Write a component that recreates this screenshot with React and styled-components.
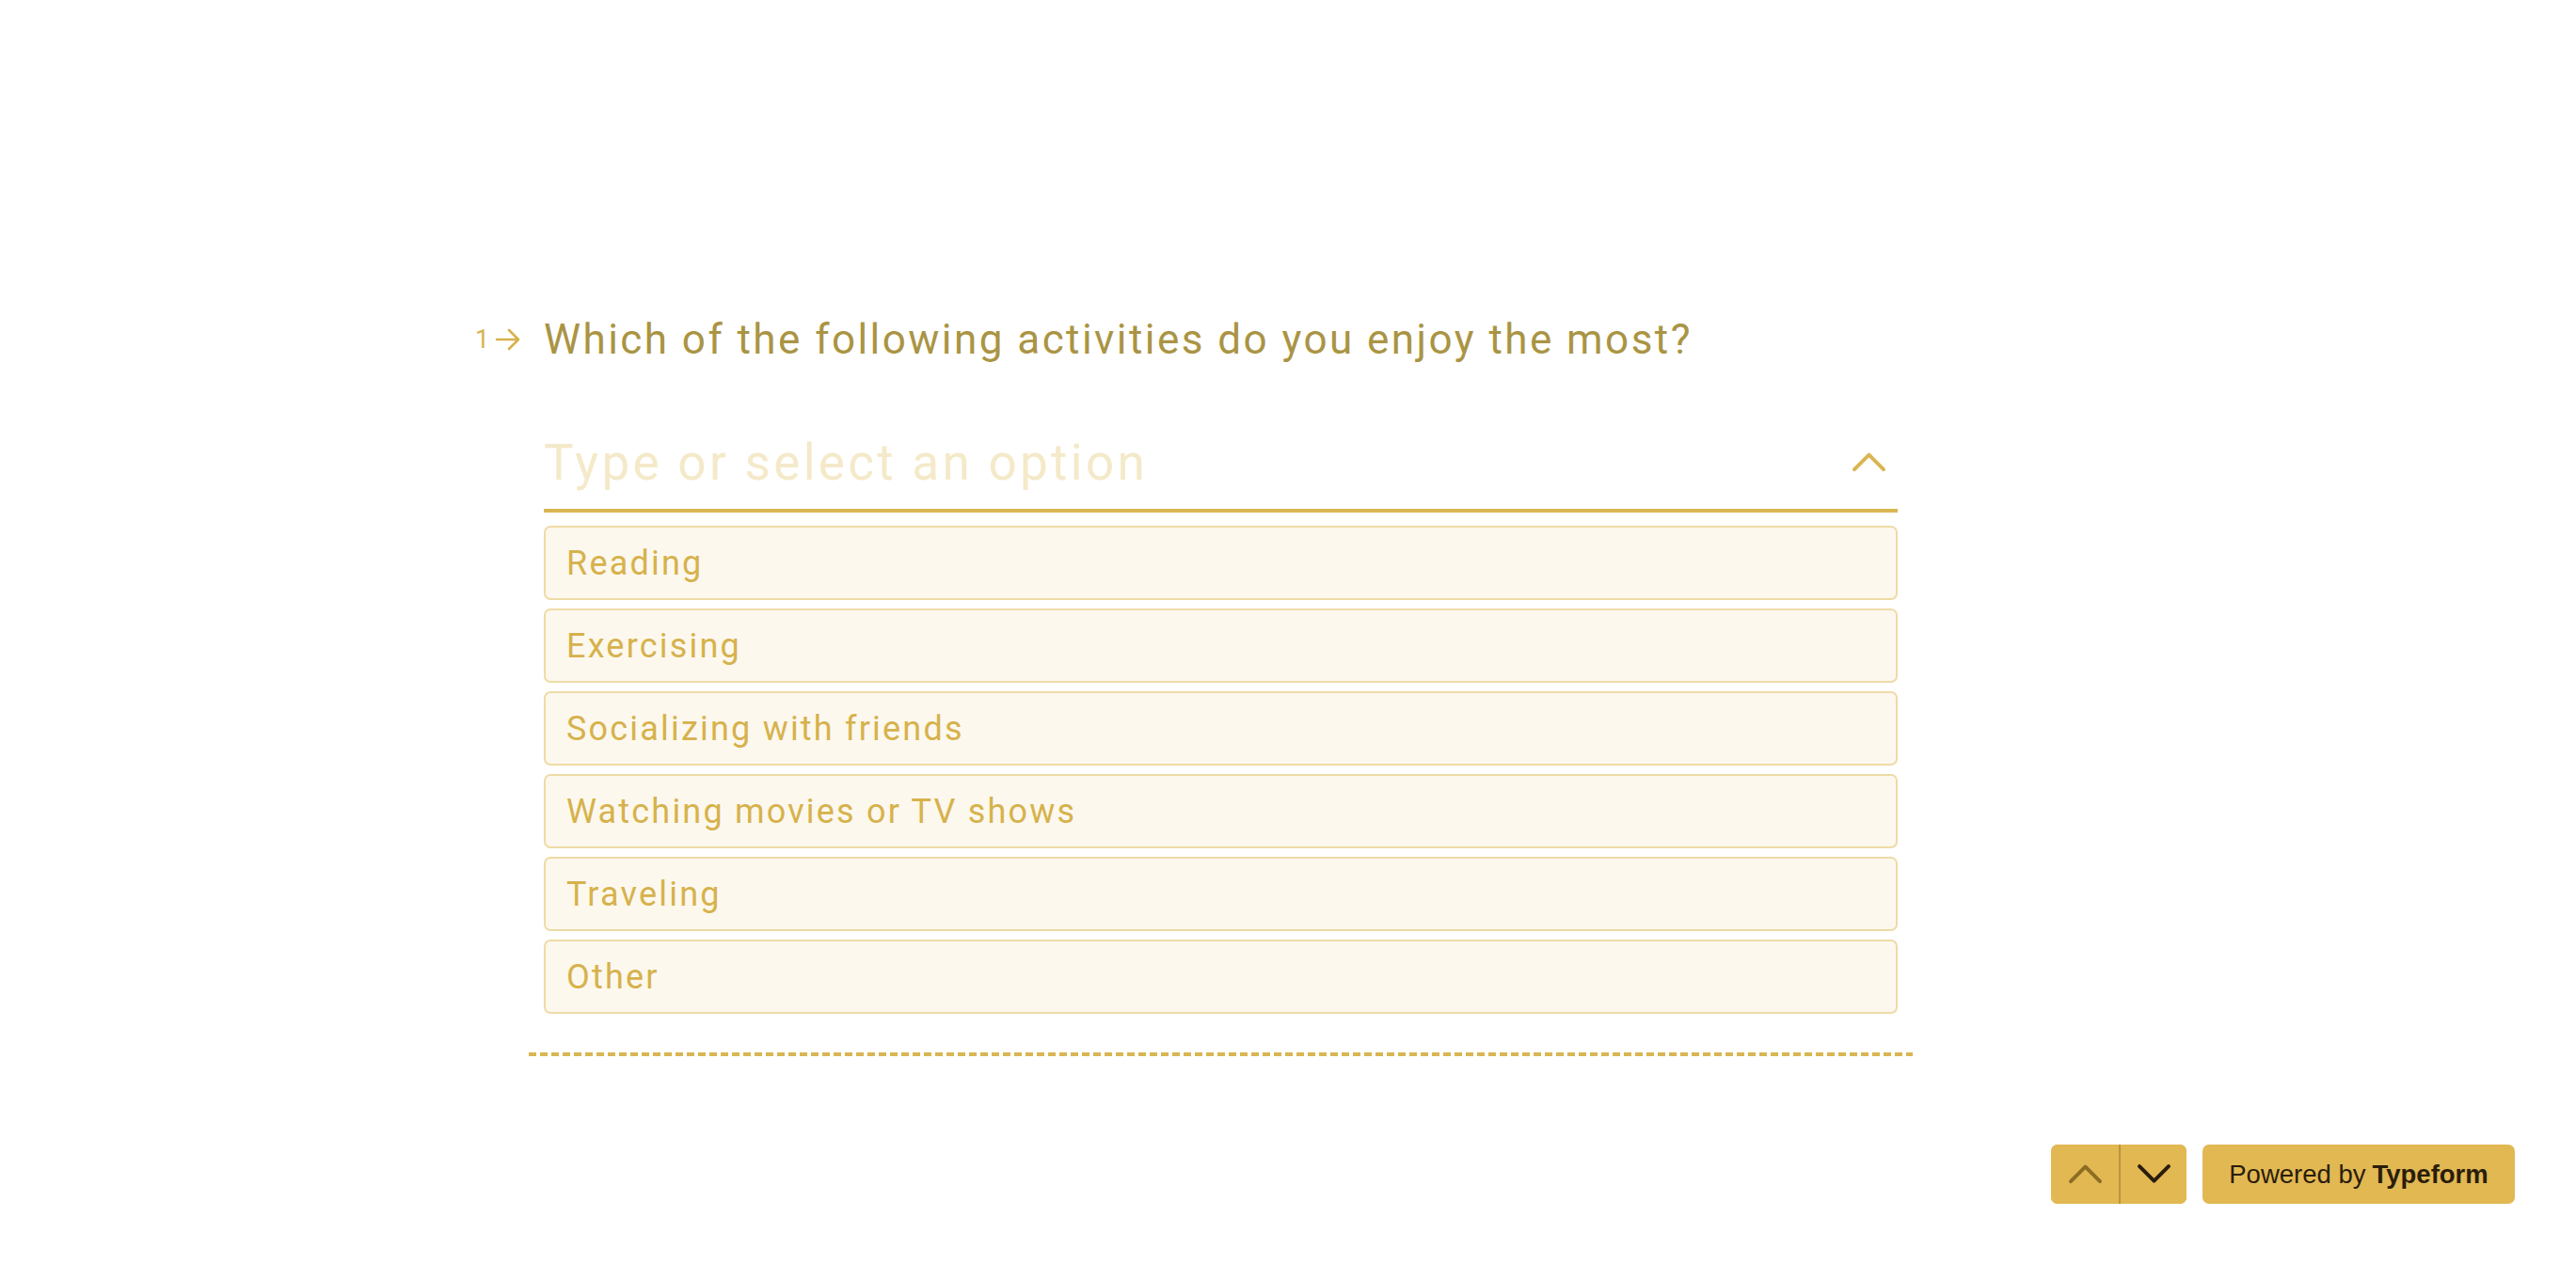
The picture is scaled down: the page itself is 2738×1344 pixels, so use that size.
import React from "react";
import styled, { createGlobalStyle } from "styled-components";

const GlobalStyle = createGlobalStyle`
  html, body { margin: 0; padding: 0; background: #ffffff; }
  body { font-family: "Roboto", "Noto Sans", sans-serif; }
  * { box-sizing: border-box; }
`;

const Page = styled.div`
  min-height: 100vh;
  width: 100%;
  position: relative;
  background: #ffffff;
`;

const Main = styled.main`
  padding-top: 332px;
  padding-left: 578px;
  width: 2017px;
`;

const QuestionRow = styled.div`
  display: flex;
  align-items: center;
  height: 58px;
`;

const Counter = styled.div`
  display: flex;
  align-items: center;
  gap: 6px;
  width: 73px;
  margin-left: -73px;
  color: #d6b24d;
  font-size: 27px;
  line-height: 1;
`;

const QuestionText = styled.h1`
  margin: 0;
  font-family: "Roboto", "Noto Sans", sans-serif;
  font-weight: 400;
  font-size: 44px;
  line-height: 58px;
  color: #aa9444;
  letter-spacing: 2.45px;
  white-space: nowrap;
`;

const InputWrap = styled.div`
  margin-top: 68px;
  display: flex;
  align-items: center;
  justify-content: space-between;
  padding-bottom: 14px;
  border-bottom: 4px solid #d9b653;
`;

const Placeholder = styled.div`
  font-size: 53px;
  line-height: 69px;
  color: #f4e9c9;
  letter-spacing: 3.3px;
`;

const Toggle = styled.div`
  display: flex;
  align-items: center;
  margin-right: 12px;
  margin-top: -3px;
`;

const Options = styled.ul`
  list-style: none;
  margin: 14px 0 0 0;
  padding: 0;
  display: flex;
  flex-direction: column;
  gap: 9px;
`;

const Option = styled.li`
  height: 79px;
  display: flex;
  align-items: center;
  padding-left: 22px;
  background: #fdf8ee;
  border: 2px solid #eedba6;
  border-radius: 7px;
  color: #d6b24c;
  font-size: 36px;
  letter-spacing: 2.2px;
`;

const Divider = styled.div`
  margin: 41px -16px 0 -16px;
  height: 4px;
  background-image: linear-gradient(to right, #d9b653 0 8px, transparent 8px 12px);
  background-size: 12px 4px;
  background-repeat: repeat-x;
`;

const Footer = styled.div`
  position: fixed;
  right: 65px;
  bottom: 64px;
  display: flex;
  gap: 17px;
`;

const NavGroup = styled.div`
  display: flex;
  height: 63px;
  border-radius: 7px;
  overflow: hidden;
  background: #e2b853;
`;

const NavButton = styled.button`
  width: 72px;
  height: 63px;
  border: none;
  padding: 0;
  margin: 0;
  background: #e2b853;
  display: flex;
  align-items: center;
  justify-content: center;
  cursor: pointer;
  border-left: ${(p) => (p.$divided ? "2px solid #b8963a" : "none")};
`;

const Badge = styled.a`
  height: 63px;
  width: 332px;
  border-radius: 7px;
  background: #e2b853;
  color: #2a1d0b;
  font-family: "Liberation Sans", Arial, sans-serif;
  font-size: 27.5px;
  display: flex;
  align-items: center;
  justify-content: center;
  text-decoration: none;
  b { font-weight: 700; margin-left: 7px; }
`;

const ChevronUp = ({ color, size = 37, stroke = 4 }) => (
  <svg width={size} height={size * 0.6} viewBox="0 0 37 22" fill="none">
    <polyline points="3,19 18.5,3.5 34,19" stroke={color} strokeWidth={stroke} strokeLinecap="round" strokeLinejoin="round" />
  </svg>
);

const ChevronDown = ({ color, size = 37, stroke = 4 }) => (
  <svg width={size} height={size * 0.6} viewBox="0 0 37 22" fill="none">
    <polyline points="3,3 18.5,18.5 34,3" stroke={color} strokeWidth={stroke} strokeLinecap="round" strokeLinejoin="round" />
  </svg>
);

const Arrow = () => (
  <svg width="28" height="26" viewBox="0 0 28 26" fill="none">
    <path d="M2 13 H25 M15 3 L25 13 L15 23" stroke="#d6b24d" strokeWidth="2.6" strokeLinecap="round" strokeLinejoin="round" />
  </svg>
);

const options = [
  "Reading",
  "Exercising",
  "Socializing with friends",
  "Watching movies or TV shows",
  "Traveling",
  "Other",
];

export default function App() {
  return (
    <Page>
      <GlobalStyle />
      <Main>
        <QuestionRow>
          <Counter>
            <span>1</span>
            <Arrow />
          </Counter>
          <QuestionText>Which of the following activities do you enjoy the most?</QuestionText>
        </QuestionRow>
        <InputWrap>
          <Placeholder>Type or select an option</Placeholder>
          <Toggle>
            <ChevronUp color="#d9b653" />
          </Toggle>
        </InputWrap>
        <Options>
          {options.map((o) => (
            <Option key={o}>{o}</Option>
          ))}
        </Options>
        <Divider />
      </Main>
      <Footer>
        <NavGroup>
          <NavButton aria-label="Previous">
            <ChevronUp color="#8c6d22" />
          </NavButton>
          <NavButton $divided aria-label="Next">
            <ChevronDown color="#2a1d0b" />
          </NavButton>
        </NavGroup>
        <Badge href="#">
          Powered by<b>Typeform</b>
        </Badge>
      </Footer>
    </Page>
  );
}
